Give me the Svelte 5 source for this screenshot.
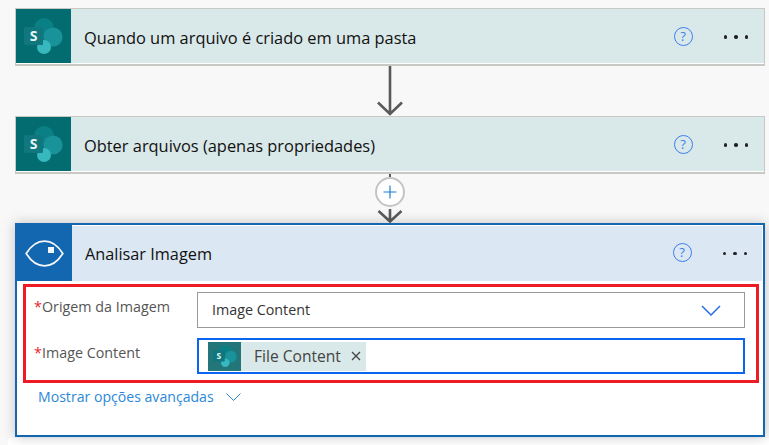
{#snippet sharepoint(width, height)}
  <svg class="sp" {width} {height} viewBox="0 0 39 36" aria-hidden="true">
    <circle cx="20" cy="10" r="10" fill="#0b7f86" />
    <circle cx="29" cy="19" r="9.6" fill="#1a929a" />
    <circle cx="20" cy="29" r="7" fill="#37b7be" />
    <rect x="0" y="9" width="19" height="18" rx="1.2" fill="#0f777d" />
    <text x="9.5" y="23.2" text-anchor="middle" class="sp-s">S</text>
  </svg>
{/snippet}

{#snippet actions()}
  <div class="actions">
    <span class="help">?</span>
    <span class="dots"><i></i><i></i><i></i></span>
  </div>
{/snippet}

<div class="canvas">
  <section class="card sp-card">
    <div class="head">
      <div class="tile teal">{@render sharepoint(39, 36)}</div>
      <h2>Quando um arquivo é criado em uma pasta</h2>
      {@render actions()}
    </div>
  </section>

  <div class="link first">
    <svg class="arrow" width="28" height="50" viewBox="0 0 28 50" aria-hidden="true">
      <path d="M14 0V48M2 36.5L14 48L26 36.5" fill="none" stroke="#5a5a5a" stroke-width="2.6" />
    </svg>
  </div>

  <section class="card sp-card">
    <div class="head">
      <div class="tile teal">{@render sharepoint(39, 36)}</div>
      <h2>Obter arquivos (apenas propriedades)</h2>
      {@render actions()}
    </div>
  </section>

  <div class="link second">
    <span class="stub"></span>
    <span class="plus">
      <svg width="14" height="14" viewBox="0 0 14 14" aria-hidden="true"><path d="M7 0.5V13.5M0.5 7H13.5" stroke="#1a7fd8" stroke-width="1.2" fill="none" /></svg>
    </span>
    <svg class="tip" width="26" height="14" viewBox="0 0 26 14" aria-hidden="true">
      <path d="M13 0V12.5M1.5 2L13 12.5L24.5 2" fill="none" stroke="#5a5a5a" stroke-width="2.6" />
    </svg>
  </div>

  <section class="card vision">
    <div class="head blue">
      <div class="tile azure">
        <svg width="39" height="27" viewBox="0 0 39 27" aria-hidden="true">
          <path d="M1.2 13.5C6.5 5 12.5 1.2 19.5 1.2S32.5 5 37.8 13.5C32.5 22 26.5 25.8 19.5 25.8S6.5 22 1.2 13.5Z" fill="none" stroke="#f2f6fb" stroke-width="1.8" />
          <rect x="23" y="7" width="6" height="6" fill="#f2f6fb" />
        </svg>
      </div>
      <h2>Analisar Imagem</h2>
      {@render actions()}
    </div>
    <div class="body">
      <div class="fields">
        <div class="row">
          <label for="origem"><b>*</b>Origem da Imagem</label>
          <div class="input select" id="origem">
            <span>Image Content</span>
            <svg width="20" height="11" viewBox="0 0 20 11" aria-hidden="true"><path d="M1 1L10 10L19 1" fill="none" stroke="#2a6fe8" stroke-width="1.5" /></svg>
          </div>
        </div>
        <div class="row second-row">
          <label for="conteudo"><b>*</b>Image Content</label>
          <div class="input focus" id="conteudo">
            <span class="token">
              <span class="token-icon">{@render sharepoint(24, 22)}</span>
              <span class="token-text">File Content</span>
              <svg width="10" height="10" viewBox="0 0 10 10" aria-hidden="true"><path d="M1 1L9 9M9 1L1 9" stroke="#444" stroke-width="1.3" /></svg>
            </span>
          </div>
        </div>
      </div>
      <div class="advanced">
        <span>Mostrar opções avançadas</span>
        <svg width="15" height="8" viewBox="0 0 15 8" aria-hidden="true"><path d="M0.5 0.5L7.5 7.5L14.5 0.5" fill="none" stroke="#2b88d8" stroke-width="1" /></svg>
      </div>
    </div>
  </section>
  <div class="foot"></div>
</div>

<style>
  :global(body) {
    margin: 0;
    background: #f8f8f8;
  }
  .canvas {
    box-sizing: border-box;
    width: 769px;
    height: 445px;
    padding: 8px 4px 0 15px;
    background: #f8f8f8;
    font-family: "Open Sans", "Noto Sans", sans-serif;
    overflow: hidden;
  }
  .card {
    box-sizing: border-box;
    width: 750px;
    background: #fff;
  }
  .sp-card {
    height: 58px;
    border: 1px solid #c8c8c4;
    border-bottom-width: 2px;
  }
  .sp-card .head {
    height: 54px;
    background: #d9e8e8;
  }
  .head {
    display: flex;
    align-items: center;
  }
  .tile {
    flex: none;
    width: 55px;
    align-self: stretch;
    display: flex;
    align-items: center;
    justify-content: center;
  }
  .teal { background: #036c70; }
  .azure { background: #1267b0; }
  .sp { display: block; }
  .sp-s {
    font: 700 14px "Open Sans", sans-serif;
    fill: #e6f4f4;
  }
  h2 {
    flex: 1;
    margin: 2px 0 0 13px;
    font-size: 16.4px;
    font-weight: 400;
    color: #111;
    white-space: nowrap;
  }
  .actions {
    display: flex;
    align-items: center;
    flex: none;
  }
  .help {
    box-sizing: border-box;
    width: 19px;
    height: 19px;
    border: 1.4px solid #3d7ef0;
    border-radius: 50%;
    color: #3d7ef0;
    font-size: 13px;
    line-height: 16px;
    text-align: center;
  }
  .dots {
    display: flex;
    gap: 7px;
    margin: 2px 16px 0 31px;
  }
  .dots i {
    width: 3.5px;
    height: 3.5px;
    border-radius: 50%;
    background: #222;
  }
  .link {
    display: flex;
    justify-content: center;
  }
  .arrow { display: block; }
  .first { width: 750px; height: 50px; }
  .second {
    width: 750px;
    height: 49px;
    flex-direction: column;
    align-items: center;
    justify-content: flex-start;
  }
  .stub {
    flex: none;
    width: 2.6px;
    height: 3px;
    background: #5a5a5a;
  }
  .plus {
    flex: none;
    box-sizing: border-box;
    width: 30px;
    height: 30px;
    border: 2px solid #c4c4c4;
    border-radius: 50%;
    background: #fff;
    display: flex;
    align-items: center;
    justify-content: center;
  }
  .tip { display: block; flex: none; margin-top: 2px; }
  .vision {
    position: relative;
    height: 214px;
    border: 2px solid #1267b0;
    box-shadow: 0 0 12px rgba(0, 0, 0, 0.22);
  }
  .head.blue {
    box-sizing: border-box;
    height: 56px;
    background: #dbe7f3;
    border-top: 1px solid #fff;
    margin-right: 1px;
  }
  .head.blue .tile { margin-top: -1px; }
  .head.blue h2 { font-size: 16.3px; margin-top: 0; }
  .head.blue .actions { margin-top: -2px; }
  .head.blue .help { margin-right: 2px; }
  .head.blue .dots { margin-left: 29px; margin-right: 15px; }
  .body { padding: 3px 0 0 6px; }
  .fields {
    box-sizing: border-box;
    width: 736px;
    height: 99px;
    border: 3px solid #ed1c24;
    padding: 5px 0 0 8px;
  }
  .row {
    display: flex;
    height: 36px;
  }
  .second-row { margin-top: 10px; }
  label {
    flex: none;
    width: 163px;
    padding-top: 5px;
    font-size: 14.3px;
    color: #555;
    white-space: nowrap;
  }
  label b {
    display: inline-block;
    width: 8px;
    color: #e3242b;
    font-weight: 400;
  }
  .input {
    box-sizing: border-box;
    width: 548px;
    display: flex;
    align-items: center;
    background: #fff;
    font-size: 14.3px;
    color: #333;
  }
  .select {
    border: 1px solid #999;
    padding: 0 23px 0 14px;
    justify-content: space-between;
  }
  .select span { margin-top: -2px; }
  .focus {
    border: 2px solid #0a66f0;
    padding: 0 0 0 9px;
  }
  .token {
    display: flex;
    align-items: center;
    height: 29px;
    width: 158px;
    background: #d9e8e8;
    font-size: 15.6px;
    color: #444;
  }
  .token-icon {
    flex: none;
    width: 33px;
    height: 29px;
    background: #22767a;
    display: flex;
    align-items: center;
    justify-content: center;
  }
  .token-text { margin: 0 10px 0 13px; white-space: nowrap; }
  .advanced {
    display: flex;
    align-items: center;
    gap: 12px;
    margin: 4px 0 0 15px;
    font-size: 14.1px;
    color: #2b88d8;
  }
  .foot {
    height: 8px;
    margin: 1px -4px 0 -7px;
    background: #fff;
  }
</style>
